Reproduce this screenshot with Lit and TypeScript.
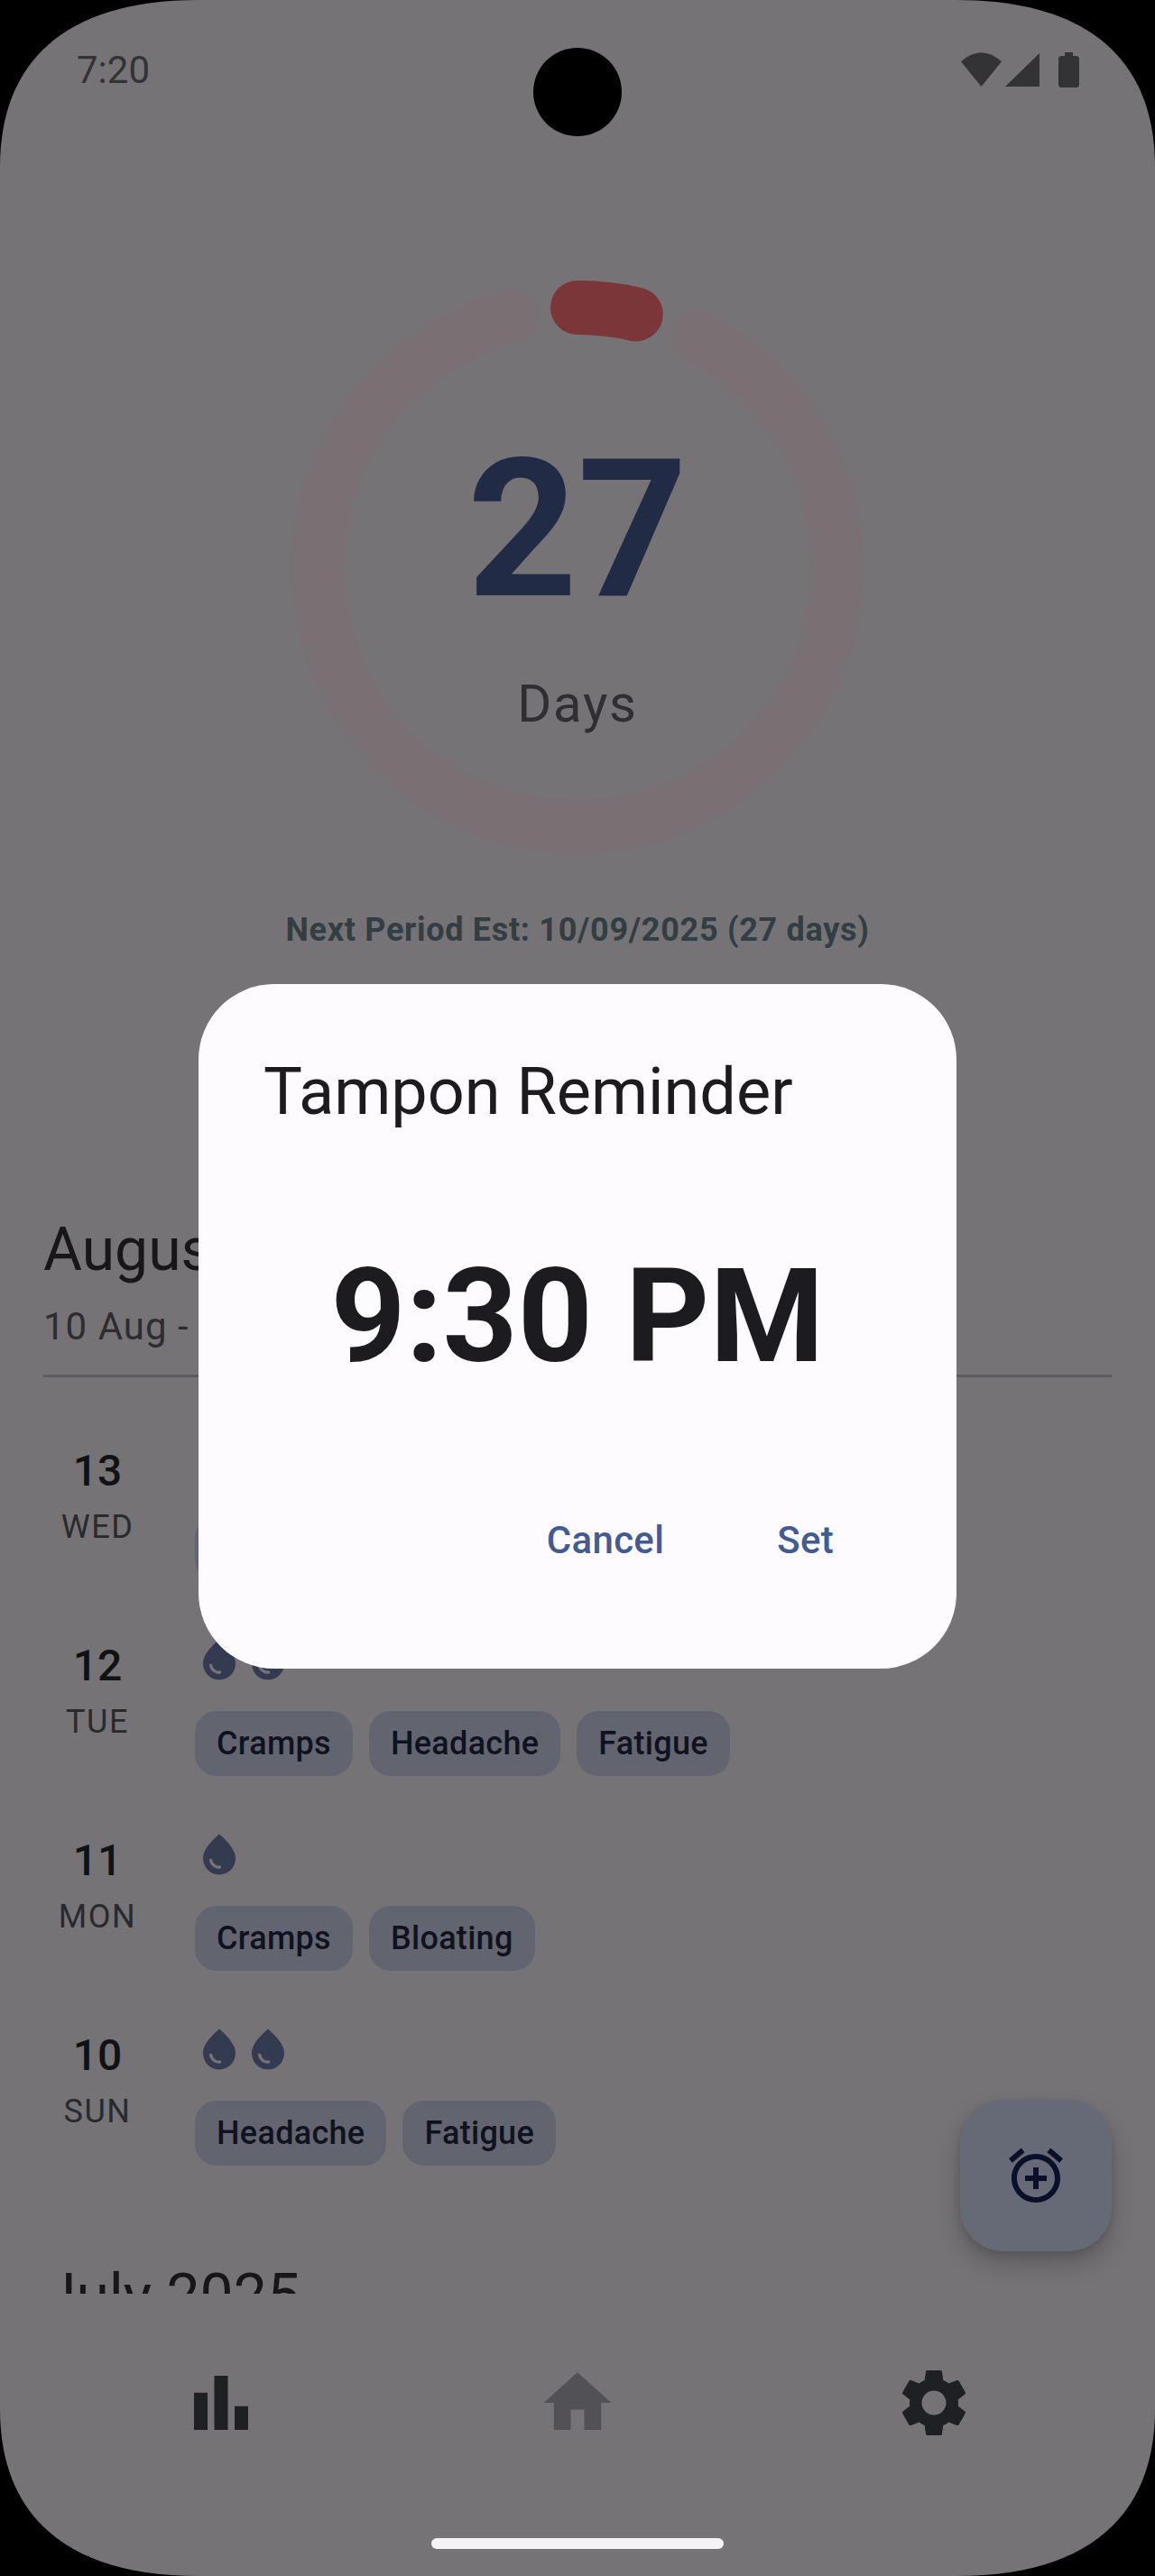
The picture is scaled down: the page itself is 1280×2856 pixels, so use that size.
import { LitElement, html, css, svg } from "lit";
import { customElement } from "lit/decorators.js";

const DROP =
  "M12 2c-5.33 4.55-8 8.48-8 11.8 0 4.98 3.8 8.2 8 8.2s8-3.22 8-8.2c0-3.32-2.67-7.25-8-11.8zM7.83 14c.37 0 .67.26.74.62.41 2.22 2.28 2.98 3.64 2.87.43-.02.79.32.79.75 0 .4-.32.73-.72.75-2.13.13-4.62-1.09-5.19-4.12-.08-.45.28-.87.74-.87z";
const ALARM_ADD =
  "M7.88 3.39L6.6 1.86 2 5.71l1.29 1.53 4.59-3.85zM22 5.72l-4.6-3.86-1.29 1.53 4.6 3.86L22 5.72zM12 4c-4.97 0-9 4.03-9 9s4.02 9 9 9c4.97 0 9-4.03 9-9s-4.03-9-9-9zm0 16c-3.87 0-7-3.13-7-7s3.13-7 7-7 7 3.13 7 7-3.13 7-7 7zm1-11h-2v3H8v2h3v3h2v-3h3v-2h-3V9z";
const BAR_CHART = "M4 9h4v11H4zm12 4h4v7h-4zm-6-9h4v16h-4z";
const HOME = "M10 20v-6h4v6h5v-8h3L12 3 2 12h3v8z";
const SETTINGS =
  "M19.14,12.94c0.04-0.3,0.06-0.61,0.06-0.94c0-0.32-0.02-0.64-0.07-0.94l2.03-1.58c0.18-0.14,0.23-0.41,0.12-0.61l-1.92-3.32c-0.12-0.22-0.37-0.29-0.59-0.22l-2.39,0.96c-0.5-0.38-1.03-0.7-1.62-0.94L14.4,2.81c-0.04-0.24-0.24-0.41-0.48-0.41h-3.84c-0.24,0-0.43,0.17-0.47,0.41L9.25,5.35C8.66,5.59,8.12,5.92,7.63,6.29L5.24,5.33c-0.22-0.08-0.47,0-0.59,0.22L2.74,8.87C2.62,9.08,2.66,9.34,2.86,9.48l2.03,1.58C4.84,11.36,4.8,11.69,4.8,12s0.02,0.64,0.07,0.94l-2.03,1.58c-0.18,0.14-0.23,0.41-0.12,0.61l1.92,3.32c0.12,0.22,0.37,0.29,0.59,0.22l2.39-0.96c0.5,0.38,1.03,0.7,1.62,0.94l0.36,2.54c0.05,0.24,0.24,0.41,0.48,0.41h3.84c0.24,0,0.44-0.17,0.47-0.41l0.36-2.54c0.59-0.24,1.13-0.56,1.62-0.94l2.39,0.96c0.22,0.08,0.47,0,0.59-0.22l1.92-3.32c0.12-0.22,0.07-0.47-0.12-0.61L19.14,12.94zM12,15.6c-1.98,0-3.6-1.62-3.6-3.6s1.62-3.6,3.6-3.6s3.6,1.62,3.6,3.6S13.98,15.6,12,15.6z";

const DAYS = [
  { num: 13, name: "WED", drops: 2, chips: ["Cramps", "Fatigue"] },
  { num: 12, name: "TUE", drops: 2, chips: ["Cramps", "Headache", "Fatigue"] },
  { num: 11, name: "MON", drops: 1, chips: ["Cramps", "Bloating"] },
  { num: 10, name: "SUN", drops: 2, chips: ["Headache", "Fatigue"] },
];

const icon = (d: string, cls: string) => html`<svg class=${cls} viewBox="0 0 24 24">${svg`<path d=${d} fill-rule="evenodd"></path>`}</svg>`;

@customElement("app-root")
export class AppRoot extends LitElement {
  static styles = css`
    :host {
      display: block;
      background: #000;
      font-family: Roboto, "Noto Sans", sans-serif;
    }
    .phone {
      position: relative;
      height: 2856px;
      overflow: hidden;
      display: flex;
      flex-direction: column;
      background: #757376;
      clip-path: path("M0 185C0 70 70 0 220 0L1060 0C1210 0 1280 70 1280 185L1280 2671C1280 2786 1210 2856 1060 2856L220 2856C70 2856 0 2786 0 2671Z");
    }
    .status {
      flex: none;
      height: 120px;
      box-sizing: border-box;
      padding: 53px 84px 0 85px;
      display: flex;
      justify-content: space-between;
      align-items: flex-start;
      color: #333335;
      font-size: 42px;
      line-height: 50px;
    }
    .status svg {
      display: block;
      margin-top: 5px;
      fill: #333335;
    }
    .camera {
      position: absolute;
      left: 591px;
      top: 53px;
      width: 98px;
      height: 98px;
      border-radius: 50%;
      background: #000;
    }
    .scroll {
      flex: none;
      height: 2423px;
      overflow: hidden;
    }
    .ring {
      display: grid;
      width: 640px;
      height: 640px;
      margin: 189px auto 0;
    }
    .ring > * {
      grid-area: 1 / 1;
    }
    .ring svg {
      display: block;
      overflow: visible;
      fill: none;
      stroke-width: 60;
      stroke-linecap: round;
    }
    .track {
      stroke: #797073;
    }
    .arc {
      stroke: #7b3639;
    }
    .ring-text {
      display: flex;
      flex-direction: column;
      align-items: center;
      padding-top: 172px;
    }
    .count {
      font-size: 213px;
      line-height: 213px;
      font-weight: 700;
      color: #212b45;
    }
    .unit {
      margin-top: 57px;
      font-size: 58px;
      line-height: 58px;
      letter-spacing: 1.7px;
      color: #2e2e33;
    }
    .next {
      margin-top: 60px;
      text-align: center;
      font-size: 36px;
      line-height: 44px;
      font-weight: 700;
      letter-spacing: 0.7px;
      color: #323e43;
    }
    .section {
      padding: 0 48px;
    }
    .month {
      font-size: 66px;
      line-height: 80px;
      color: #17171a;
    }
    .first {
      margin-top: 293px;
    }
    .range {
      margin-top: 20px;
      font-size: 42px;
      line-height: 50px;
      letter-spacing: 1px;
      color: #2d2d30;
    }
    .divider {
      height: 3px;
      margin: 28px 0 70px;
      background: #5b5a5e;
    }
    .days {
      display: flex;
      flex-direction: column;
      gap: 60px;
    }
    .day {
      display: grid;
      grid-template-columns: 120px 1fr;
      column-gap: 48px;
    }
    .date {
      display: flex;
      flex-direction: column;
      align-items: center;
      padding-top: 6px;
    }
    .num {
      font-size: 48px;
      line-height: 56px;
      font-weight: 500;
      color: #111214;
    }
    .name {
      margin-top: 12px;
      font-size: 36px;
      line-height: 44px;
      letter-spacing: 1.5px;
      color: #2a2a2d;
    }
    .drops {
      display: flex;
      height: 54px;
    }
    .drop {
      width: 54px;
      height: 54px;
      fill: #343b50;
    }
    .chips {
      display: flex;
      gap: 18px;
      margin-top: 30px;
    }
    .chip {
      height: 72px;
      box-sizing: border-box;
      padding: 0 24px;
      border-radius: 24px;
      background: #62656f;
      color: #10131f;
      font-size: 36px;
      line-height: 72px;
      font-weight: 500;
      letter-spacing: 0.3px;
    }
    .later {
      margin-top: 105px;
    }
    .nav {
      flex: none;
      display: grid;
      grid-template-columns: repeat(3, 1fr);
      justify-items: center;
      align-content: start;
      padding: 76px 48px 0;
    }
    .nav-icon {
      width: 90px;
      height: 90px;
      fill: #1f2023;
    }
    .nav-icon.current {
      fill: #525155;
    }
    .gesture {
      position: absolute;
      left: 478px;
      top: 2814px;
      width: 324px;
      height: 12px;
      border-radius: 6px;
      background: #f4f4f4;
    }
    .fab {
      position: absolute;
      right: 48px;
      top: 2328px;
      width: 168px;
      height: 168px;
      border-radius: 48px;
      background: #666a76;
      display: grid;
      place-items: center;
      box-shadow: 0 14px 28px rgba(0, 0, 0, 0.2), 0 4px 10px rgba(0, 0, 0, 0.12);
    }
    .fab-icon {
      width: 72px;
      height: 72px;
      fill: #0b1029;
    }
    .dialog {
      position: absolute;
      left: 220px;
      top: 1091px;
      width: 840px;
      height: 759px;
      box-sizing: border-box;
      padding: 76px 0 0;
      border-radius: 84px;
      background: #fefbff;
    }
    .dialog h2 {
      margin: 0;
      padding-left: 72px;
      font-size: 72px;
      line-height: 88px;
      font-weight: 400;
      color: #1c1b1f;
    }
    .time {
      margin-top: 119px;
      text-align: center;
      font-size: 145px;
      line-height: 170px;
      font-weight: 700;
      color: #1c1b1f;
    }
    .actions {
      display: flex;
      justify-content: flex-end;
      gap: 125px;
      margin-top: 139px;
      padding-right: 136px;
      font-size: 42px;
      line-height: 50px;
      font-weight: 500;
      letter-spacing: 0.3px;
      color: #435b90;
    }
  `;

  render() {
    return html`
      <div class="phone">
        <div class="status">
          <span>7:20</span>
          <svg width="131" height="39" viewBox="0 0 131 39">
            <path d="M0 10.3Q22.5-9.7 45 10.3L22.5 38Z"></path>
            <path d="M49 38L87 1V38Z"></path>
            <path d="M115 0h9v4h3.5a3.5 3.5 0 0 1 3.5 3.5V35.500a3.500 3.500 0 0 1-3.500 3.500H111.500a3.500 3.500 0 0 1-3.500-3.500V7.500a3.500 3.500 0 0 1 3.500-3.500H115Z"></path>
          </svg>
        </div>

        <div class="scroll">
          <div class="ring">
            <svg width="640" height="640" viewBox="0 0 640 640">
              <path class="track" d="M453 64.500A288 288 0 1 1 248.400 41"></path>
              <path class="arc" d="M320 32A288 288 0 0 1 384.800 39.400"></path>
            </svg>
            <div class="ring-text">
              <div class="count">27</div>
              <div class="unit">Days</div>
            </div>
          </div>
          <div class="next">Next Period Est: 10/09/2025 (27 days)</div>

          <div class="section">
            <div class="month first">August 2025</div>
            <div class="range">10 Aug - 13 Aug</div>
            <div class="divider"></div>
            <div class="days">
              ${DAYS.map(
                (d) => html`
                  <div class="day">
                    <div class="date">
                      <span class="num">${d.num}</span>
                      <span class="name">${d.name}</span>
                    </div>
                    <div>
                      <div class="drops">${Array.from({ length: d.drops }, () => icon(DROP, "drop"))}</div>
                      <div class="chips">${d.chips.map((c) => html`<span class="chip">${c}</span>`)}</div>
                    </div>
                  </div>
                `
              )}
            </div>
            <div class="month later">July 2025</div>
          </div>
        </div>

        <div class="nav">
          ${icon(BAR_CHART, "nav-icon")} ${icon(HOME, "nav-icon current")} ${icon(SETTINGS, "nav-icon")}
        </div>

        <div class="camera"></div>
        <div class="fab">${icon(ALARM_ADD, "fab-icon")}</div>
        <div class="dialog">
          <h2>Tampon Reminder</h2>
          <div class="time">9:30 PM</div>
          <div class="actions"><span>Cancel</span><span>Set</span></div>
        </div>
        <div class="gesture"></div>
      </div>
    `;
  }
}
